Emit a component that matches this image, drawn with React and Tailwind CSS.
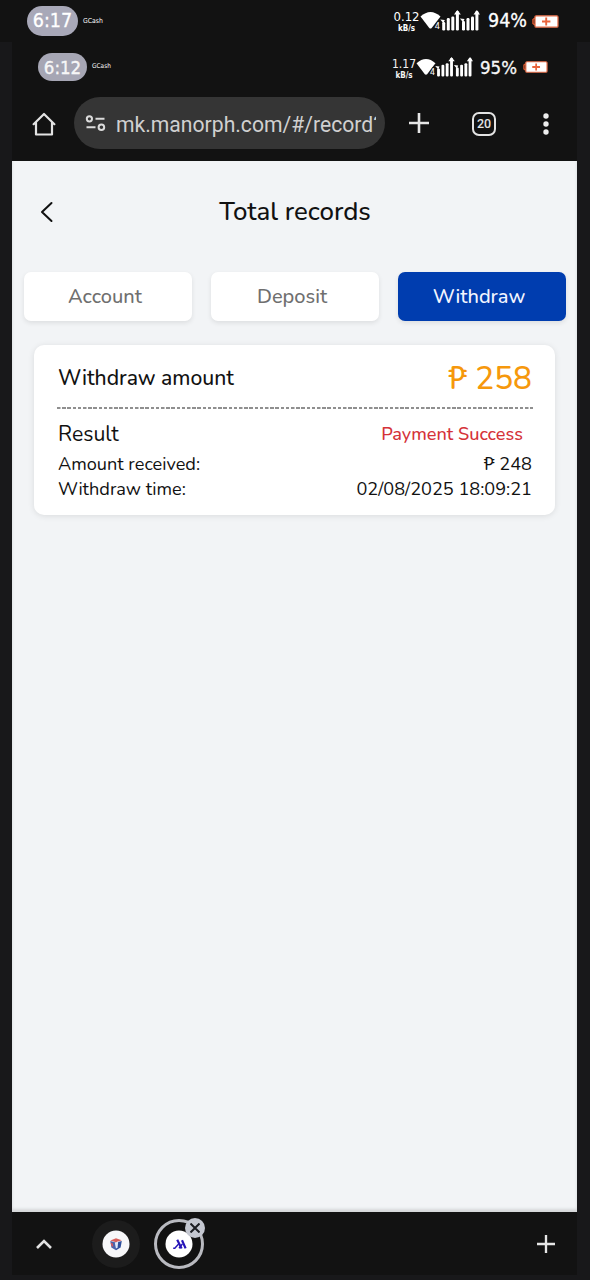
import React, { useState } from 'react';

const records = [
    { id: 1, amount: 258, received: 248, status: 'Payment Success', time: '02/08/2025 18:09:21' },
];

const tabs = ['Account', 'Deposit', 'Withdraw'];

const SignalIcon = ({ className }) => (
    <svg viewBox="0 0 60 22" className={className} fill="#fff">
        <path d="M0.5 6.5Q10.5 -2.5 20.5 6.5L11.7 18Q10.5 19 9.3 18Z" />
        <text x="14.8" y="19" fontSize="9" fontFamily="Roboto, sans-serif" fill="#fff" stroke="#141414" strokeWidth="1.6" paintOrder="stroke">4</text>
        <path d="M20.2 9.4l4.6.6-1.4 3.2z" />
        <rect x="22.2" y="12" width="3" height="8.5" rx="1.2" />
        <rect x="26.8" y="8" width="3" height="12.5" rx="1.2" />
        <rect x="31.3" y="6.5" width="3" height="14" rx="1.2" />
        <rect x="35.9" y="1" width="3" height="19.5" rx="1.2" />
        <path d="M34 4.4L37.4 0l3.4 4.4z" />
        <path d="M39.9 8.4l4.6.6-1.4 3.2z" />
        <rect x="42" y="11" width="3" height="9.5" rx="1.2" />
        <rect x="46.5" y="8" width="3" height="12.5" rx="1.2" />
        <rect x="51" y="6.5" width="3" height="14" rx="1.2" />
        <rect x="55.4" y="1" width="3" height="19.5" rx="1.2" />
        <path d="M53.5 4.4L56.9 0l3.1 4.4z" />
    </svg>
);

const BatteryIcon = ({ className }) => (
    <svg viewBox="0 0 27 13" className={className}>
        <path d="M2.8 3L1 4.5v4l1.8 1.5" fill="none" stroke="#d9572f" strokeWidth="1.5" />
        <rect x="3" y=".8" width="23" height="11.4" rx="1.2" fill="#fff" stroke="#e26a45" strokeWidth="1.3" />
        <path d="M10 6.5h8.4M14.2 2.6v7.8" stroke="#e9633b" strokeWidth="1.9" />
    </svg>
);

const HomeIcon = () => (
    <svg viewBox="0 0 24 24" className="mt-px h-6 w-6" fill="none" stroke="#e3e3e3" strokeWidth="2.2" strokeLinejoin="round" strokeLinecap="round">
        <path d="M1.6 12.2L12 2l10.4 10.2M4 10.5V22.5H20V10.5" />
    </svg>
);

const SiteIcon = () => (
    <svg viewBox="0 0 21 18" className="h-[18px] w-[21px]" fill="none" stroke="#dcdcdc" strokeWidth="2">
        <circle cx="4.4" cy="4.8" r="2.6" />
        <path d="M10.5 4.8H19.5M1.5 13.2H10.5" />
        <circle cx="16.4" cy="13.2" r="2.8" />
    </svg>
);

const PlusIcon = ({ className }) => (
    <svg viewBox="0 0 20 20" className={className} fill="none" stroke="#e6e6e6" strokeWidth="2.6">
        <path d="M10 0v20M0 10h20" />
    </svg>
);

const Page = () => {
    const [active, setActive] = useState('Withdraw');

    return (
        <main className="h-[1051px] bg-[#f2f4f6] pt-[30px] text-[#111] shadow-[inset_0_-3px_3px_#d5d7d9]">
            <header className="flex h-[42px] items-center pl-[27px] pr-[61px]">
                <button>
                    <svg viewBox="0 0 14 22" className="-mt-px h-[22px] w-[14px]" fill="none" stroke="#111" strokeWidth="2" strokeLinecap="round" strokeLinejoin="round">
                        <path d="M12.5 2L3 11l9.5 9" />
                    </svg>
                </button>
                <h1 className="flex-1 pl-[21px] text-center text-[25.8px] font-medium whitespace-nowrap">Total records</h1>
            </header>

            <nav className="mt-[39px] flex justify-between pl-3 pr-[11px]">
                {tabs.map((tab) => (
                    <button
                        key={tab}
                        onClick={() => setActive(tab)}
                        className={`h-[49px] w-[168px] rounded-[7px] pr-[6px] text-[20px] font-medium shadow-[0_2px_5px_rgba(0,0,0,0.09)] ${active === tab ? 'bg-[#003daf] text-[#f2f5ff]' : 'bg-white text-[#6f6f6f]'}`}
                    >
                        {tab}
                    </button>
                ))}
            </nav>

            {records.map((record) => (
                <section key={record.id} className="mx-[22px] mt-6 h-[170px] w-[521px] rounded-[10px] bg-white pl-6 pr-[23px] shadow-[0_1px_6px_rgba(0,0,0,0.1)]">
                    <div className="flex h-[62px] items-center justify-between pt-1.5">
                        <h2 className="text-[21.1px] font-medium">Withdraw amount</h2>
                        <span className="text-[31.5px] font-medium text-[#f6980c]">₱ {record.amount}</span>
                    </div>
                    <div className="-mx-px h-0.5 bg-[repeating-linear-gradient(90deg,#8f8f8f_0px,#8f8f8f_3.4px,#ffffff_3.6px,#ffffff_5.2px)]" />
                    <div className="flex h-[50px] items-center justify-between pt-0.5">
                        <span className="text-[21.2px]">Result</span>
                        <span className="pr-[9px] text-[18.1px] font-medium text-[#d53239]">{record.status}</span>
                    </div>
                    <div className="-mt-[7px] flex h-[25px] items-center justify-between text-[18.15px]">
                        <span>Amount received:</span>
                        <span>₱ {record.received}</span>
                    </div>
                    <div className="flex h-[25px] items-center justify-between text-[18.15px]">
                        <span>Withdraw time:</span>
                        <span>{record.time}</span>
                    </div>
                </section>
            ))}
        </main>
    );
};

const App = () => {
    return (
        <div className="h-[1280px] w-[590px] overflow-hidden bg-[#18181a] font-['Nunito','Lato',sans-serif]">
            <div className="flex h-[42px] items-center bg-[#121212] pl-[27px] font-['DejaVu_Sans_Condensed','Noto_Sans',sans-serif] text-white">
                <span className="flex h-[30px] w-[51px] items-center justify-center rounded-full bg-[#a8a8b8] text-[19.5px] [-webkit-text-stroke:0.3px_white]">6:17</span>
                <span className="ml-[5px] w-[311px] text-[6.8px]">GCash</span>
                <span className="flex w-[25px] flex-col items-center pt-px">
                    <span className="text-[13px] leading-[14px]">0.12</span>
                    <span className="text-[8px] font-bold leading-[10px]">kB/s</span>
                </span>
                <SignalIcon className="ml-px h-[22px] w-[60px]" />
                <span className="ml-2 w-[44px] text-[19.5px] [-webkit-text-stroke:0.3px_white]">94%</span>
                <BatteryIcon className="h-[13px] w-[27px]" />
            </div>

            <div className="ml-3 w-[565px] bg-[#121212]">
                <div className="flex h-[50px] items-center pl-[26px] font-['DejaVu_Sans_Condensed','Noto_Sans',sans-serif] text-[#f4f4f4]">
                    <span className="flex h-7 w-[49px] items-center justify-center rounded-full bg-[#a6a6b4] pt-px text-[18.5px] [-webkit-text-stroke:0.3px_white]">6:12</span>
                    <span className="ml-[5px] w-[300px] text-[6.5px]">GCash</span>
                    <span className="flex w-[24px] flex-col items-center pt-[3px]">
                        <span className="text-[12px] leading-[14px]">1.17</span>
                        <span className="text-[8px] font-bold leading-[10px]">kB/s</span>
                    </span>
                    <SignalIcon className="h-[21px] w-[57px]" />
                    <span className="ml-[7px] w-[43px] pt-px text-[18.5px] [-webkit-text-stroke:0.3px_white]">95%</span>
                    <BatteryIcon className="h-[12px] w-[25px]" />
                </div>

                <div className="flex h-[69px] items-center pb-[7px] pl-[20px]">
                    <HomeIcon />
                    <div className="ml-[18px] flex h-[52px] w-[311px] items-center rounded-full bg-[#353535] pl-[11px]">
                        <SiteIcon />
                        <span className="ml-[10px] mt-[3px] w-[260px] overflow-hidden whitespace-nowrap font-['Roboto',sans-serif] text-[21.15px] text-[#d0d0d0]">
                            mk.manorph.com/#/record?
                        </span>
                    </div>
                    <PlusIcon className="ml-6 h-5 w-5" />
                    <span className="ml-[43px] mt-px flex h-6 w-6 items-center justify-center rounded-[7px] border-[2.4px] border-[#e3e3e3] pt-px font-['Roboto',sans-serif] text-[12.5px] font-medium text-[#e3e3e3]">20</span>
                    <svg viewBox="0 0 6 22" className="ml-[47px] mt-px h-[22px] w-1.5" fill="#eee">
                        <circle cx="3" cy="3" r="2.7" />
                        <circle cx="3" cy="11" r="2.7" />
                        <circle cx="3" cy="19" r="2.7" />
                    </svg>
                </div>

                <Page />

                <footer className="flex h-[63px] items-center pl-6">
                    <svg viewBox="0 0 16 10" className="h-[10px] w-4" fill="none" stroke="#e3e3e3" strokeWidth="2.6">
                        <path d="M1 9l7-7 7 7" />
                    </svg>
                    <span className="ml-[40px] flex h-12 w-12 items-center justify-center rounded-full bg-[#1c1c1c]">
                        <svg viewBox="0 0 28 28" className="h-7 w-7">
                            <circle cx="14" cy="14" r="13.5" fill="#f7f7f9" />
                            <path d="M8.3 11l5.7 1.6v7.6l-4.6-2.6z" fill="#4a63ab" />
                            <path d="M19.8 11l-5.8 1.6v7.6l4.6-2.6z" fill="#2f4f9c" />
                            <path d="M8.3 10.4L14 8.2l5.7 2-5.7 2z" fill="#d8605c" />
                            <path d="M12.8 12.8l3.4-1.2-.6 5.6-1.6 1.6z" fill="#dfe8fa" />
                            <path d="M8.6 12.6l2.2.8.4 3.4-1.8-.9z" fill="#cf5a60" />
                        </svg>
                    </span>
                    <span className="relative ml-[14px] flex h-[50px] w-[50px] items-center justify-center rounded-full border-[3px] border-[#b9bac0]">
                        <svg viewBox="0 0 28 28" className="h-7 w-7 shrink-0">
                            <circle cx="14" cy="14" r="13.5" fill="#fff" />
                            <path d="M8.2 18.2h1.6L13.6 14M14 18.2L17.4 14" fill="none" stroke="#2514b8" strokeWidth="1.4" />
                            <path d="M12.2 9.8l4.4 8.6M17 10.2l3.6 8.2" fill="none" stroke="#2514b8" strokeWidth="2.2" />
                        </svg>
                        <span className="absolute -right-1 -top-1 flex h-5 w-5 items-center justify-center rounded-full bg-[#c4c7d0]">
                            <svg viewBox="0 0 10 10" className="h-[10px] w-[10px]" stroke="#1b1d22" strokeWidth="2">
                                <path d="M0.5 0.5l9 9M9.5 0.5l-9 9" />
                            </svg>
                        </span>
                    </span>
                    <PlusIcon className="ml-[333px] h-[18px] w-[18px]" />
                </footer>
            </div>
        </div>
    );
};

export default App;
